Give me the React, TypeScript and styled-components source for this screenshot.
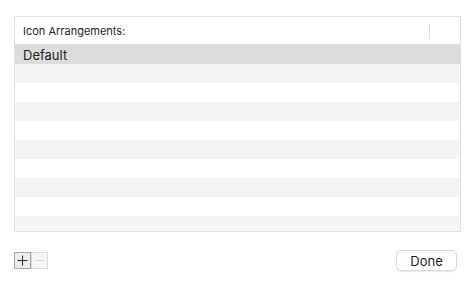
import React from "react";
import styled, { createGlobalStyle } from "styled-components";

const Global = createGlobalStyle`
  html, body { margin: 0; padding: 0; background: #ffffff; }
  body { font-family: "Inter", "Liberation Sans", Arial, sans-serif; -webkit-font-smoothing: antialiased; }
`;

const Page = styled.div`
  width: 470px;
  height: 284px;
  box-sizing: border-box;
  padding: 16px 9px 0 14px;
  display: flex;
  flex-direction: column;
`;

const Table = styled.div`
  height: 216px;
  box-sizing: border-box;
  border: 1px solid #e0e0e0;
  display: flex;
  flex-direction: column;
  overflow: hidden;
`;

const Header = styled.div`
  height: 28px;
  flex: none;
  box-sizing: border-box;
  border-bottom: 1px solid #e2e2e2;
  display: flex;
  align-items: center;
  padding-left: 8px;
  padding-right: 30px;
  font-size: 11px;
  color: #262626;
`;

const HeaderLabel = styled.div`
  flex: 1;
`;

const HeaderDivider = styled.div`
  width: 1px;
  height: 16px;
  background: #dedede;
`;

const Row = styled.div<{ $tone: "sel" | "odd" | "even" }>`
  height: 19px;
  flex: none;
  display: flex;
  align-items: center;
  padding-left: 8px;
  font-size: 13px;
  color: #1e1e1e;
  background: ${(p) => (p.$tone === "sel" ? "#dcdcdc" : p.$tone === "odd" ? "#f3f4f4" : "#ffffff")};
`;

const Footer = styled.div`
  display: flex;
  align-items: center;
  justify-content: space-between;
  margin-top: 18px;
  padding-right: 4px;
`;

const Segment = styled.div`
  display: flex;
`;

const SegButton = styled.div<{ $disabled?: boolean }>`
  width: 17px;
  height: 17px;
  box-sizing: border-box;
  border: 1px solid ${(p) => (p.$disabled ? "#dadada" : "#a8a8a8")};
  background: ${(p) => (p.$disabled ? "#f5f5f5" : "#ececec")};
  display: flex;
  align-items: center;
  justify-content: center;
`;

const DoneButton = styled.div`
  width: 61px;
  height: 21px;
  box-sizing: border-box;
  border: 1px solid #d9d9d9;
  border-radius: 5px;
  background: #ffffff;
  box-shadow: 0 1px 1px rgba(0, 0, 0, 0.08);
  display: flex;
  align-items: center;
  justify-content: center;
  font-size: 13px;
  color: #1e1e1e;
`;

const rows: Array<{ label: string; tone: "sel" | "odd" | "even" }> = [
  { label: "Default", tone: "sel" },
];
for (let i = 0; i < 9; i++) rows.push({ label: "", tone: i % 2 === 0 ? "odd" : "even" });

export default function App() {
  return (
    <>
      <Global />
      <Page>
        <Table>
          <Header>
            <HeaderLabel>Icon Arrangements:</HeaderLabel>
            <HeaderDivider />
          </Header>
          {rows.map((r, i) => (
            <Row key={i} $tone={r.tone}>
              {r.label}
            </Row>
          ))}
        </Table>
        <Footer>
          <Segment>
            <SegButton>
              <svg width="11" height="11" viewBox="0 0 11 11">
                <path d="M5.5 0.5v10M0.5 5.5h10" stroke="#2a2a2a" strokeWidth="1" />
              </svg>
            </SegButton>
            <SegButton $disabled>
              <svg width="11" height="11" viewBox="0 0 11 11">
                <path d="M1 5.5h9" stroke="#d4d4d4" strokeWidth="1" />
              </svg>
            </SegButton>
          </Segment>
          <DoneButton>Done</DoneButton>
        </Footer>
      </Page>
    </>
  );
}
